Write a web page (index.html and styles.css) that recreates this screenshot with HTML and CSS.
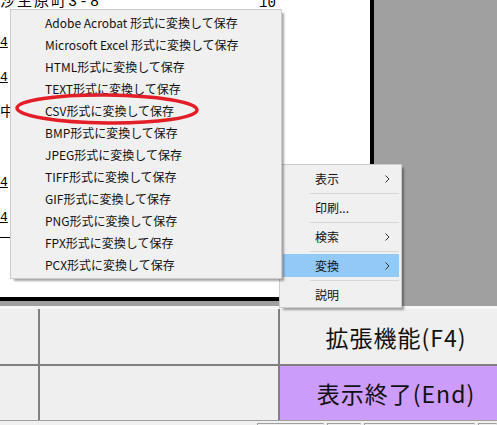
FILE: index.html
```html
<!DOCTYPE html>
<html lang="ja">
<head>
    <meta charset="UTF-8">
    <title>印刷プレビュー</title>
    <link rel="stylesheet" href="styles.css">
</head>
<body>
    <div class="viewer">
        <div class="page">
            <div class="page-head">
                <span class="addr">沙主原町3-8</span>
                <span class="num">10</span>
            </div>
            <div class="doc-body">
                <div class="doc-row"><span class="ul">4</span></div>
                <div class="doc-row"><span class="ul">4</span></div>
                <div class="doc-row">中</div>
                <div class="doc-row"></div>
                <div class="doc-row"><span class="ul">4</span></div>
                <div class="doc-row"><span class="ul">4</span></div>
                <div class="doc-rule"></div>
            </div>
        </div>
    </div>

    <div class="panel">
        <div class="cell"></div>
        <div class="cell"></div>
        <div class="cell">拡張機能(F4)</div>
        <div class="cell"></div>
        <div class="cell"></div>
        <div class="cell cell-end">表示終了(End)</div>
    </div>

    <div class="status">
        <div class="status-box w71"></div>
        <div class="status-box w36"></div>
        <div class="status-box w117"></div>
        <div class="status-box w20"></div>
    </div>

    <!-- context menu -->
    <ul class="menu main-menu">
        <li class="item">表示<span class="arrow"><svg width="5" height="8" viewBox="0 0 5 8"><polyline points="0.5,0.5 4,4 0.5,7.5" fill="none" stroke="#333" stroke-width="1"/></svg></span></li>
        <li class="sep"></li>
        <li class="item">印刷...</li>
        <li class="sep"></li>
        <li class="item">検索<span class="arrow"><svg width="5" height="8" viewBox="0 0 5 8"><polyline points="0.5,0.5 4,4 0.5,7.5" fill="none" stroke="#333" stroke-width="1"/></svg></span></li>
        <li class="sep"></li>
        <li class="item active">変換<span class="arrow"><svg width="5" height="8" viewBox="0 0 5 8"><polyline points="0.5,0.5 4,4 0.5,7.5" fill="none" stroke="#333" stroke-width="1"/></svg></span></li>
        <li class="sep"></li>
        <li class="item">説明</li>
    </ul>

    <!-- submenu for 変換 -->
    <ul class="menu sub-menu">
        <li class="sub-item">Adobe Acrobat 形式に変換して保存</li>
        <li class="sub-item">Microsoft Excel 形式に変換して保存</li>
        <li class="sub-item">HTML形式に変換して保存</li>
        <li class="sub-item">TEXT形式に変換して保存</li>
        <li class="sub-item">CSV形式に変換して保存</li>
        <li class="sub-item">BMP形式に変換して保存</li>
        <li class="sub-item">JPEG形式に変換して保存</li>
        <li class="sub-item">TIFF形式に変換して保存</li>
        <li class="sub-item">GIF形式に変換して保存</li>
        <li class="sub-item">PNG形式に変換して保存</li>
        <li class="sub-item">FPX形式に変換して保存</li>
        <li class="sub-item">PCX形式に変換して保存</li>
    </ul>

    <svg class="mark" width="190" height="36" viewBox="0 0 190 36">
        <ellipse cx="93" cy="17" rx="90" ry="14" fill="none" stroke="#e31e26" stroke-width="3.5" transform="rotate(0.6 93 17)"/>
    </svg>
</body>
</html>
```

FILE: styles.css
```css
* {
    margin: 0;
    padding: 0;
    box-sizing: border-box;
}

body {
    width: 497px;
    height: 425px;
    overflow: hidden;
    position: relative;
    background-color: #a0a0a0;
    font-family: "Noto Sans CJK JP", sans-serif;
    color: #000;
}

/* preview area */
.viewer {
    height: 306px;
    display: flex;
}

.page {
    width: 374px;
    height: 301px;
    background-color: #ffffff;
    border-right: 4px solid #000;
    border-bottom: 4px solid #000;
    font-family: "Noto Sans CJK JP", monospace;
    font-size: 14px;
    overflow: hidden;
}

.page-head {
    height: 24px;
    display: flex;
    margin-top: -6px;
    line-height: 18px;
}

.addr {
    letter-spacing: 2px;
    font-family: "Liberation Mono", "Noto Sans CJK JP", monospace;
    font-size: 15px;
}

.num {
    margin-left: 158px;
    font-family: "Liberation Mono", monospace;
    font-size: 14px;
}

.doc-body {
    padding-top: 5px;
}

.doc-row {
    height: 35px;
    line-height: 35px;
    font-size: 14px;
}

.ul {
    font-family: "Liberation Mono", monospace;
    font-size: 13px;
    text-decoration: underline;
}

.doc-rule {
    width: 10px;
    height: 1px;
    margin-top: 4px;
    background-color: #000;
}

/* button panel */
.panel {
    width: 512px;
    display: grid;
    grid-template-columns: 38px 238px 232px;
    grid-template-rows: 55px 54px;
    gap: 2px;
    background-color: #808080;
    border-top: 3px solid #f6f6f6;
    border-bottom: 1px solid #a0a0a0;
}

.cell {
    background-color: #efefef;
    display: flex;
    align-items: center;
    justify-content: center;
    font-size: 23px;
    letter-spacing: 1px;
    color: #111;
}

.cell-end {
    background-color: #cc9cfa;
}

.status {
    height: 4px;
    display: flex;
    background-color: #f0f0f0;
    padding-left: 257px;
    padding-top: 2px;
    gap: 3px;
}

.status-box {
    height: 4px;
    border-top: 1px solid #a0a0a0;
    border-left: 1px solid #a0a0a0;
    border-right: 1px solid #e0e0e0;
}

.w71 { width: 71px; }
.w36 { width: 36px; }
.w117 { width: 117px; }
.w20 { width: 20px; }

/* menus */
.menu {
    position: absolute;
    list-style: none;
    background-color: #f0f0f0;
    border: 1px solid #cccccc;
    box-shadow: 3px 3px 2px -1px rgba(0, 0, 0, 0.35);
    font-size: 12px;
}

.main-menu {
    left: 279px;
    top: 164px;
    width: 123px;
    padding: 2px 0 1px;
}

.item {
    height: 23px;
    line-height: 23px;
    margin: 0 2px 0 3px;
    padding-left: 32px;
    position: relative;
    color: #111;
}

.item.active {
    background-color: #91c9f7;
}

.arrow {
    position: absolute;
    right: 9px;
    top: 0;
    height: 23px;
    display: flex;
    align-items: center;
}

.sep {
    height: 6px;
    margin: 0 2px 0 30px;
    position: relative;
}

.sep::after {
    content: '';
    position: absolute;
    left: 0;
    right: 0;
    top: 3px;
    height: 1px;
    background-color: #d7d7d7;
}

.sub-menu {
    left: 10px;
    top: 9px;
    width: 272px;
    padding: 2px 0 2px;
}

.sub-item {
    height: 22px;
    line-height: 22px;
    padding-left: 34px;
    color: #111;
    white-space: nowrap;
}

.mark {
    position: absolute;
    left: 14px;
    top: 92px;
}
```
